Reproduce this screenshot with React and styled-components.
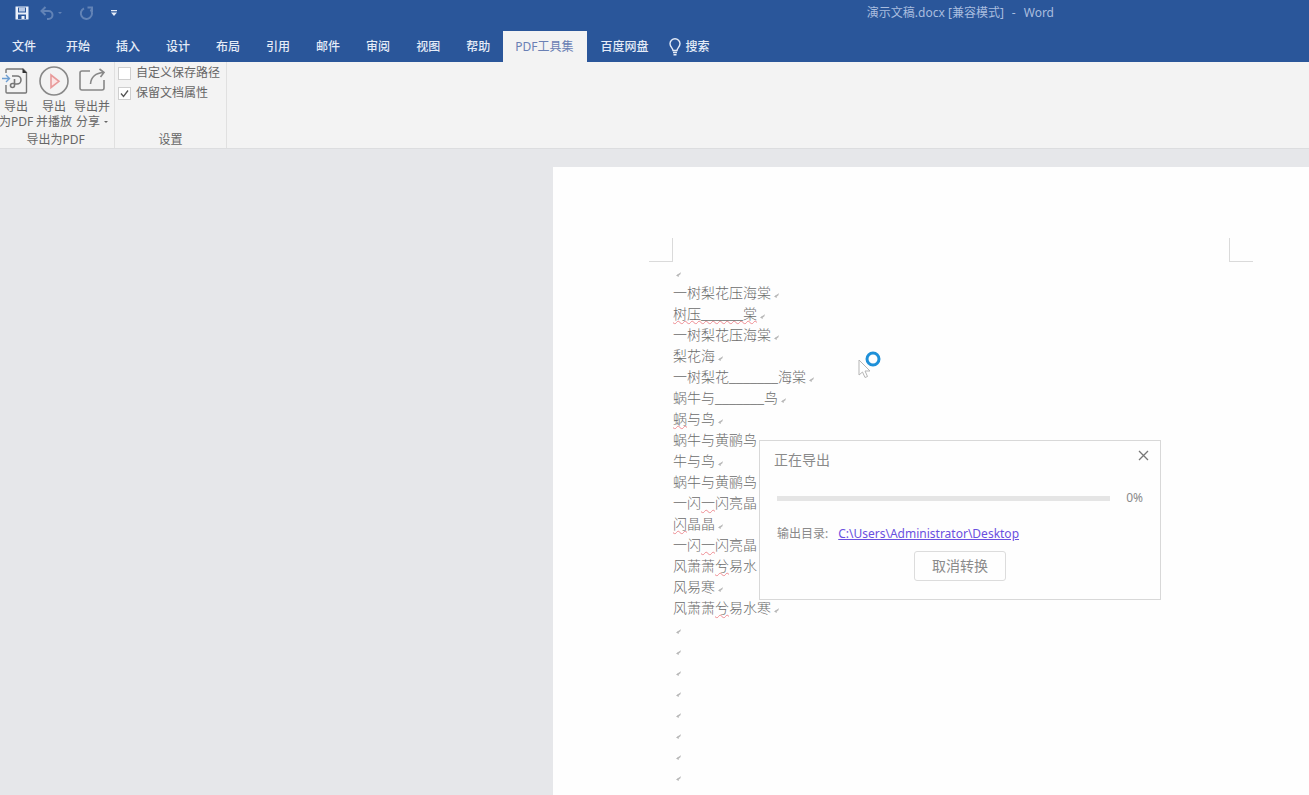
import React from 'react';
import styled, { createGlobalStyle } from 'styled-components';

const GlobalStyle = createGlobalStyle`
  *,*:before,*:after{box-sizing:border-box}
  html,body,#root{height:100%}
  body{margin:0;overflow:hidden;background:#e6e7ea;font-family:"Noto Sans","Noto Sans CJK SC",sans-serif;font-size:12px;line-height:16px;color:#666}
  button{font:inherit;color:inherit;background:none;border:0;padding:0;margin:0}
`;

const Window = styled.div`
  display: flex;
  flex-direction: column;
  height: 100%;
  overflow: hidden;
`;

const Header = styled.header`
  background: #2a569a;
  color: #e4ebf7;
`;

const TitleBar = styled.div`
  display: flex;
  align-items: center;
  height: 26px;
  padding-left: 14px;
`;

const QuickButton = styled.button`
  display: flex;
  align-items: center;
  justify-content: center;
  width: ${p => p.$width}px;
  height: 20px;
  opacity: ${p => (p.disabled ? 0.3 : 1)};
  color: #e4ebf7;
`;

const DocTitle = styled.div`
  display: flex;
  gap: 8px;
  margin-left: auto;
  margin-right: 255px;
  color: #a9bddf;
`;

const Tabs = styled.nav`
  display: flex;
  align-items: stretch;
  height: 36px;
  padding-top: 5px;
`;

const Tab = styled.button`
  display: flex;
  align-items: center;
  gap: 4px;
  flex: none;
  padding: ${p => (p.$active ? '0 14px 0 12px' : '0 13px')};
  font-weight: ${p => (p.$active ? 400 : 500)};
  background: ${p => (p.$active ? '#f3f3f3' : 'transparent')};
  color: ${p => (p.$active ? '#6a80b4' : '#e4ebf7')};

  &:first-child {
    padding: 0 17px 0 12px;
  }
  &:last-child {
    padding-left: 8px;
  }
`;

const Ribbon = styled.div`
  display: flex;
  flex: none;
  height: 87px;
  background: #f3f3f3;
  border-bottom: 1px solid #dcdddf;
`;

const Group = styled.section`
  display: flex;
  flex-direction: column;
  justify-content: space-between;
  border-right: 1px solid #e0e0e0;

  &:first-child {
    margin-left: -3px;
  }
`;

const GroupName = styled.div`
  text-align: center;
  line-height: 16px;
`;

const Tools = styled.div`
  display: flex;
  padding: 3px 3px 0 0;
`;

const ToolButton = styled.button`
  display: flex;
  flex-direction: column;
  align-items: center;
  width: 38px;
  line-height: 15px;
  white-space: nowrap;

  svg {
    margin-bottom: 2px;
  }
`;

const Caret = styled.i`
  display: inline-block;
  margin-left: 4px;
  vertical-align: 3px;
  border: 2px solid transparent;
  border-top-color: currentColor;
  border-bottom: 0;
`;

const Options = styled.div`
  display: flex;
  flex-direction: column;
  gap: 4px;
  padding: 3px 6px 0 3px;
`;

const Option = styled.label`
  display: flex;
  align-items: center;
  gap: 5px;
`;

const Checkbox = styled.input`
  appearance: none;
  width: 13px;
  height: 13px;
  margin: 0;
  border: 1px solid #cfcfcf;
  background: #fff;

  &:checked {
    background: #fff url("data:image/svg+xml,%3Csvg xmlns='http://www.w3.org/2000/svg' viewBox='0 0 11 11'%3E%3Cpath d='M2 5.5l2.5 3L9 2.5' fill='none' stroke='%23555' stroke-width='1.3'/%3E%3C/svg%3E");
  }
`;

const Workspace = styled.main`
  flex: 1;
  min-height: 0;
  padding: 18px 0 0 553px;
`;

const Page = styled.article`
  position: relative;
  height: 100%;
  padding: 71px 56px 0 96px;
  background: #fefefe;
`;

const Margins = styled.div`
  display: flex;
  justify-content: space-between;
`;

const Corner = styled.div`
  width: 24px;
  height: 24px;
  border-bottom: 1px solid #dadada;
  border-${p => p.$side}: 1px solid #dadada;
`;

const Text = styled.div`
  padding-left: 24px;
  font-family: "Liberation Serif", "Noto Sans CJK SC", serif;
  font-size: 14px;
  font-weight: 300;
  color: #6c6c6c;
`;

const Line = styled.p`
  display: flex;
  align-items: center;
  height: 21px;
  margin: 0;
  line-height: 20px;
  white-space: nowrap;

  svg {
    margin: 4px 0 0 3px;
  }
`;

const Typo = styled.span`
  text-decoration: underline wavy #ee8c92 1px;
  text-underline-offset: 1px;
  text-decoration-skip-ink: none;
`;

const Dialog = styled.section`
  position: absolute;
  top: 273px;
  left: 206px;
  display: flex;
  flex-direction: column;
  width: 402px;
  padding: 9px 14px 18px;
  background: #fefefe;
  border: 1px solid #d8d8d8;
  box-shadow: 0 0 0 2px #fefefe;
  color: #8a8a8a;
`;

const DialogHead = styled.div`
  display: flex;
  justify-content: space-between;
  align-items: flex-start;
  margin-right: -3px;
`;

const DialogTitle = styled.h2`
  margin: 0;
  font-size: 14px;
  font-weight: 400;
  line-height: 20px;
`;

const CloseButton = styled.button`
  display: flex;
`;

const ProgressRow = styled.div`
  display: flex;
  align-items: center;
  gap: 16px;
  margin: 20px 3px 0;
`;

const Progress = styled.progress`
  appearance: none;
  flex: 1;
  height: 5px;
  border: 0;
  background: #e5e5e5;

  &::-webkit-progress-bar {
    background: #e5e5e5;
  }
  &::-webkit-progress-value {
    background: #2a9fe0;
  }
`;

const PathRow = styled.div`
  display: flex;
  gap: 10px;
  margin: 20px 3px 0;
`;

const PathLink = styled.a`
  color: #6a50e0;
`;

const CancelButton = styled.button`
  align-self: center;
  width: 92px;
  height: 30px;
  margin-top: 9px;
  font-size: 14px;
  border: 1px solid #dcdcdc;
  border-radius: 3px;
`;

const Cursor = styled.svg`
  position: absolute;
  top: 182px;
  left: 303px;
`;

const SaveIcon = () => (
  <svg width="14" height="14" viewBox="0 0 14 14">
    <path d="M0.5 0.5h13v13h-13z" fill="#eaf0fa" />
    <path d="M3 1.5h8v5H3z" fill="#2a569a" />
    <path d="M4 1.5h6v4H4z" fill="#b9cae6" />
    <path d="M3 8.5h8v4.5H3z" fill="#2a569a" />
    <path d="M6.5 10h3v3h-3z" fill="#eaf0fa" />
  </svg>
);

const UndoIcon = () => (
  <svg width="14" height="14" viewBox="0 0 14 14" fill="none" stroke="currentColor" strokeWidth="2">
    <path d="M5.5 1L1.5 5l4 4M2 5h6.5a4 4 0 0 1 0 8H7" />
  </svg>
);

const RedoIcon = () => (
  <svg width="15" height="15" viewBox="0 0 15 15" fill="none" stroke="currentColor" strokeWidth="2">
    <path d="M5 2.3A5.6 5.6 0 1 0 11.5 3.500M8.500 1.500h4.500v4.500" />
  </svg>
);

const BulbIcon = () => (
  <svg width="12" height="18" viewBox="0 0 12 18" fill="none" stroke="currentColor" strokeWidth="1.4">
    <path d="M4 12.5C4 10 1 9 1 5.8a5 5 0 0 1 10 0C11 9 8 10 8 12.5zM4 14.5h4M4.5 16.8h3" />
  </svg>
);

const PdfIcon = () => (
  <svg width="32" height="32" viewBox="0 0 32 32" fill="none" stroke="#777" strokeWidth="1.4">
    <path d="M6 8V5a1 1 0 0 1 1-1h16l3.500 3.500V27a1 1 0 0 1-1 1H7a1 1 0 0 1-1-1v-7" />
    <path d="M22.500 3.500v4.500h4.500z" fill="#333" stroke="none" />
    <path d="M12 11h5a4 4 0 0 1 0 8h-2.500v1.500a2 2 0 1 1-2-2h2V14" strokeWidth="1.600" />
    <path d="M2 13.500h7.500M6 10l3.500 3.500L6 17" stroke="#6d9ed2" />
  </svg>
);

const PlayIcon = () => (
  <svg width="32" height="32" viewBox="0 0 32 32" fill="none" strokeWidth="1.6">
    <circle cx="16" cy="16" r="14" stroke="#888" />
    <path d="M13 10v12.500l8-6.200z" fill="#fbe4e4" stroke="#e89a9a" />
  </svg>
);

const ShareIcon = () => (
  <svg width="32" height="32" viewBox="0 0 32 32" fill="none" stroke="#888" strokeWidth="1.6">
    <path d="M14 6H6a2 2 0 0 0-2 2v15a2 2 0 0 0 2 2h20a2 2 0 0 0 2-2v-8" />
    <path d="M14.500 19C15 12.500 19.500 8 28 7.500M23.500 4l4.500 3.500-3.500 4.500" />
  </svg>
);

const ReturnMark = () => (
  <svg width="5" height="5" viewBox="0 0 5 5">
    <path d="M4.5 0.5L4 2.5 1 3.5M2.5 2v2.5L0.5 3.5z" fill="#aaa" stroke="#bbb" strokeWidth="0.6" />
  </svg>
);

const TABS = ['文件', '开始', '插入', '设计', '布局', '引用', '邮件', '审阅', '视图', '帮助', 'PDF工具集', '百度网盘'];

const LINES = [
  '',
  '一树梨花压海棠',
  <Typo>树压______棠</Typo>,
  '一树梨花压海棠',
  '梨花海',
  '一树梨花_______海棠',
  '蜗牛与_______鸟',
  <><Typo>蜗</Typo>与鸟</>,
  '蜗牛与黄鹂鸟',
  '牛与鸟',
  '蜗牛与黄鹂鸟',
  <>一闪<Typo>一</Typo>闪亮晶晶</>,
  <><Typo>闪</Typo>晶晶</>,
  <>一闪<Typo>一</Typo>闪亮晶晶</>,
  <>风萧萧<Typo>兮</Typo>易水寒</>,
  '风易寒',
  <>风萧萧<Typo>兮</Typo>易水寒</>,
  '', '', '', '', '', '', '', '',
];

const ExportDialog = () => (
  <Dialog role="dialog" aria-labelledby="export-title">
    <DialogHead>
      <DialogTitle id="export-title">正在导出</DialogTitle>
      <CloseButton aria-label="关闭">
        <svg width="11" height="11" viewBox="0 0 11 11" stroke="#777" strokeWidth="1.3">
          <path d="M1 1l9 9M10 1l-9 9" />
        </svg>
      </CloseButton>
    </DialogHead>
    <ProgressRow>
      <Progress value={0} max={100} aria-label="正在导出" />
      <span>0%</span>
    </ProgressRow>
    <PathRow>
      <span>输出目录:</span>
      <PathLink href="#desktop">C:\Users\Administrator\Desktop</PathLink>
    </PathRow>
    <CancelButton>取消转换</CancelButton>
  </Dialog>
);

export default function App() {
  return (
    <Window>
      <GlobalStyle />
      <Header>
        <TitleBar>
          <QuickButton $width={16} aria-label="保存"><SaveIcon /></QuickButton>
          <QuickButton $width={42} disabled aria-label="撤消"><UndoIcon /><Caret /></QuickButton>
          <QuickButton $width={28} disabled aria-label="重做"><RedoIcon /></QuickButton>
          <QuickButton $width={28} aria-label="自定义快速访问工具栏">
            <svg width="6" height="7" viewBox="0 0 6 7" fill="currentColor"><path d="M0 0h6v1.2H0zM0 2.5h6L3 6z" /></svg>
          </QuickButton>
          <DocTitle>
            <span>演示文稿.docx [兼容模式]</span>
            <span>-</span>
            <span>Word</span>
          </DocTitle>
        </TitleBar>
        <Tabs>
          {TABS.map(name => <Tab key={name} $active={name === 'PDF工具集'}>{name}</Tab>)}
          <Tab><BulbIcon />搜索</Tab>
        </Tabs>
      </Header>
      <Ribbon>
        <Group>
          <Tools>
            <ToolButton><PdfIcon /><span>导出</span><span>为PDF</span></ToolButton>
            <ToolButton><PlayIcon /><span>导出</span><span>并播放</span></ToolButton>
            <ToolButton><ShareIcon /><span>导出并</span><span>分享<Caret /></span></ToolButton>
          </Tools>
          <GroupName>导出为PDF</GroupName>
        </Group>
        <Group>
          <Options>
            <Option><Checkbox type="checkbox" />自定义保存路径</Option>
            <Option><Checkbox type="checkbox" defaultChecked />保留文档属性</Option>
          </Options>
          <GroupName>设置</GroupName>
        </Group>
      </Ribbon>
      <Workspace>
        <Page>
          <Margins>
            <Corner $side="right" />
            <Corner $side="left" />
          </Margins>
          <Text>
            {LINES.map((line, i) => <Line key={i}><span>{line}</span><ReturnMark /></Line>)}
          </Text>
          <Cursor width="30" height="30" viewBox="0 0 30 30" fill="none">
            <path d="M3 11v15l3.5-3 2.5 5.5 2.5-1-2.5-5.5h5z" fill="#fff" stroke="#b5b5b5" />
            <circle cx="17" cy="10" r="6" stroke="#1e90d8" strokeWidth="3" />
          </Cursor>
          <ExportDialog />
        </Page>
      </Workspace>
    </Window>
  );
}
